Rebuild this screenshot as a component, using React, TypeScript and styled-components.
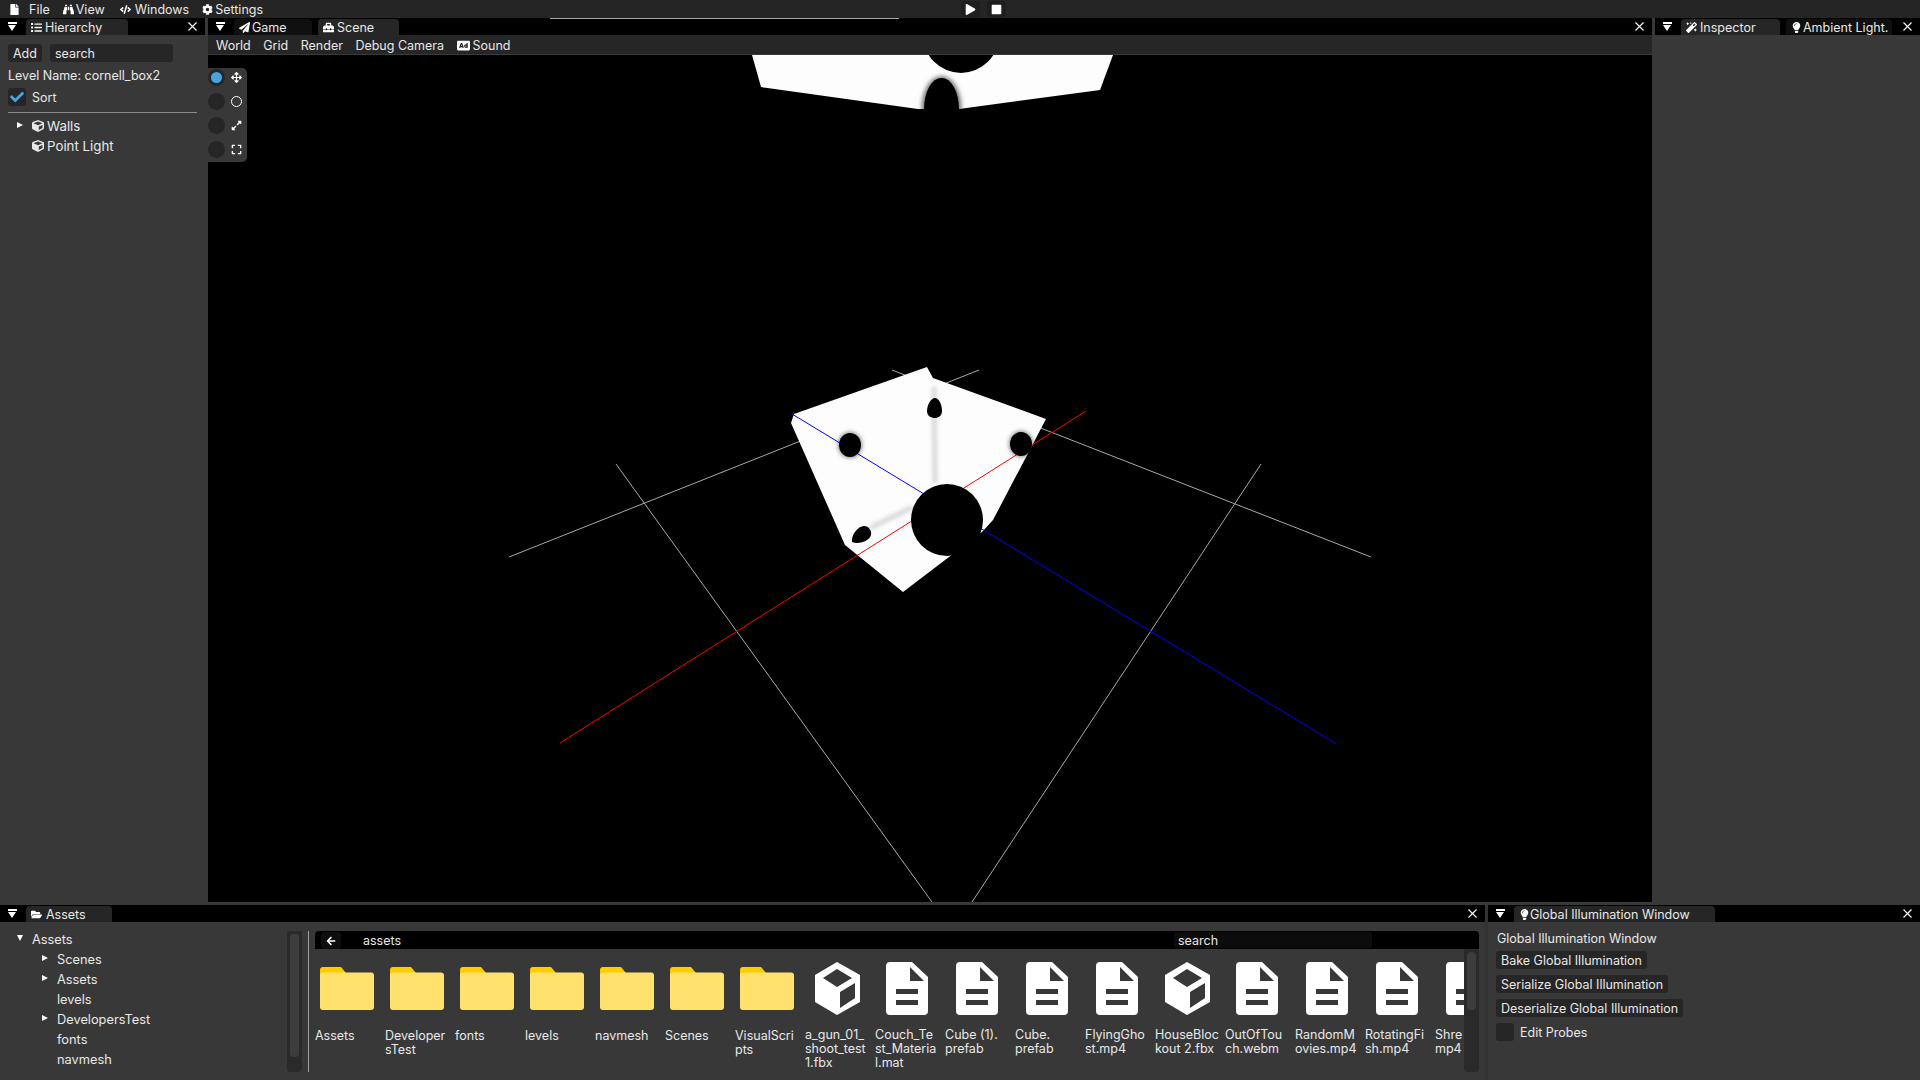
import React from "react";
import styled, { createGlobalStyle } from "styled-components";
import {
  FaAd,
  FaArrowLeft,
  FaArrowsAlt,
  FaBinoculars,
  FaCheck,
  FaCode,
  FaCog,
  FaCube,
  FaExpand,
  FaExpandAlt,
  FaFile,
  FaFolderOpen,
  FaLightbulb,
  FaList,
  FaMagic,
  FaPaperPlane,
  FaPlay,
  FaStop,
  FaToolbox,
} from "react-icons/fa";

const GlobalStyle = createGlobalStyle`
  html, body {
    margin: 0;
    padding: 0;
    background: #2a2a2a;
    overflow: hidden;
  }
  * {
    box-sizing: border-box;
  }
`;

const Page = styled.div`
  width: 1920px;
  height: 1080px;
  display: flex;
  flex-direction: column;
  background: #383838;
  color: #e8e8e8;
  font-family: Inter, "Liberation Sans", sans-serif;
  font-size: 12.5px;
  overflow: hidden;
`;

const MenuBar = styled.div`
  position: relative;
  height: 18px;
  flex: none;
  display: flex;
  align-items: center;
  background: #252525;
`;

const MenuItem = styled.div<{ $left: number; $gap?: number }>`
  display: flex;
  align-items: center;
  gap: ${(p) => p.$gap ?? 2}px;
  margin-left: ${(p) => p.$left}px;
  white-space: nowrap;
  svg {
    font-size: 11px;
    color: #fff;
  }
`;

const Progress = styled.div`
  position: absolute;
  left: 550px;
  width: 349px;
  bottom: -1px;
  height: 1px;
  background: #aaa;
  z-index: 1;
`;

const PlayControls = styled.div`
  position: absolute;
  left: 961px;
  top: 1px;
  display: flex;
  gap: 7px;
`;

const PlayButton = styled.div`
  width: 19px;
  height: 16px;
  display: flex;
  align-items: center;
  justify-content: center;
  border-radius: 3px;
  background: #1e1e1e;
  color: #fff;
  font-size: 11px;
`;

const Main = styled.div`
  height: 887px;
  flex: none;
  display: flex;
`;

const Panel = styled.section<{ $width?: number }>`
  display: flex;
  flex-direction: column;
  width: ${(p) => (p.$width ? `${p.$width}px` : "auto")};
  flex: ${(p) => (p.$width ? "none" : "1")};
  min-width: 0;
`;

const TabBar = styled.div`
  position: relative;
  height: 17px;
  flex: none;
  display: flex;
  align-items: flex-end;
  gap: 6px;
  background: #000;
  padding-left: 26px;
`;

const Tab = styled.div<{ $width: number; $dim?: boolean; $gap?: number }>`
  width: ${(p) => p.$width}px;
  height: 16px;
  display: flex;
  align-items: center;
  gap: ${(p) => p.$gap ?? 3}px;
  padding-left: 5px;
  border-radius: 4px 4px 0 0;
  background: ${(p) => (p.$dim ? "#101010" : "#262626")};
  white-space: nowrap;
  overflow: hidden;
  svg {
    font-size: 11px;
    color: #fff;
    flex: none;
  }
`;

const TabToggle = styled.div`
  position: absolute;
  left: 8px;
  top: 4px;
  width: 9px;
  height: 9px;
  &::before {
    content: "";
    display: block;
    height: 2px;
    background: #fff;
    margin-bottom: 1px;
  }
  &::after {
    content: "";
    display: block;
    width: 0;
    height: 0;
    border-left: 4.5px solid transparent;
    border-right: 4.5px solid transparent;
    border-top: 6px solid #fff;
  }
`;

const CloseButton = styled.div`
  position: absolute;
  right: 8.500px;
  top: 4px;
  width: 9px;
  height: 9px;
  display: flex;
`;

const PanelBody = styled.div`
  flex: 1;
  min-height: 0;
  background: #383838;
`;

const HierarchyBody = styled(PanelBody)`
  display: flex;
  flex-direction: column;
  padding: 9px 8px 0;
`;

const Row = styled.div<{ $gap?: number }>`
  display: flex;
  align-items: center;
  gap: ${(p) => p.$gap ?? 5}px;
`;

const Button = styled.div`
  height: 18px;
  display: inline-flex;
  align-items: center;
  align-self: flex-start;
  padding: 0 5px;
  border-radius: 3px;
  background: #262626;
  white-space: nowrap;
`;

const SearchInput = styled.div<{ $width: number }>`
  width: ${(p) => p.$width}px;
  height: 18px;
  display: flex;
  align-items: center;
  padding: 0 5px;
  border-radius: 3px;
  background: #262626;
`;

const LevelName = styled.div`
  margin-top: 6px;
  height: 16px;
  line-height: 16px;
`;

const CheckBox = styled.div`
  width: 18px;
  height: 18px;
  flex: none;
  display: flex;
  align-items: center;
  justify-content: center;
  border-radius: 3px;
  background: #262626;
  color: #4aa3df;
  font-size: 14px;
`;

const SortRow = styled(Row)`
  margin-top: 4px;
  gap: 6px;
`;

const Separator = styled.div`
  height: 1px;
  margin: 6px 0 3px;
  background: #8c8c8c;
`;

const HierarchyRow = styled.div`
  height: 20px;
  display: flex;
  align-items: center;
  gap: 3px;
  padding-left: 24px;
  position: relative;
  font-size: 13.300px;
  svg {
    font-size: 12px;
    color: #e8e8e8;
  }
`;

const Arrow = styled.span<{ $open?: boolean }>`
  position: absolute;
  width: 0;
  height: 0;
  ${(p) =>
    p.$open
      ? `border-left: 3.5px solid transparent;
         border-right: 3.5px solid transparent;
         border-top: 6px solid #fff;`
      : `border-top: 3.5px solid transparent;
         border-bottom: 3.5px solid transparent;
         border-left: 6px solid #fff;`}
`;

const RowArrow = styled(Arrow)`
  left: 9px;
  top: 6px;
`;

const Splitter = styled.div<{ $dark?: boolean }>`
  width: 3px;
  flex: none;
  background: ${(p) => (p.$dark ? "#333" : "#383838")};
`;

const SceneToolbar = styled.div`
  height: 20px;
  flex: none;
  display: flex;
  align-items: center;
  background: #262626;
  border-bottom: 1px solid #3a3a3a;
  padding: 1px 0 0 8px;
  gap: 12.5px;
`;

const ToolbarItem = styled.div`
  display: flex;
  align-items: center;
  gap: 3px;
  white-space: nowrap;
  svg {
    font-size: 13px;
    color: #fff;
  }
`;

const Viewport = styled.div`
  position: relative;
  flex: 1;
  min-height: 0;
  margin-bottom: 3px;
  background: #000;
  overflow: hidden;
`;

const SceneSvg = styled.svg`
  display: block;
  width: 100%;
  height: 100%;
`;

const Gizmos = styled.div`
  position: absolute;
  left: 0;
  top: 13px;
  width: 39px;
  padding-bottom: 4px;
  display: flex;
  flex-direction: column;
  gap: 6px;
  background: #383838;
  border-radius: 0 5px 5px 0;
`;

const GizmoRow = styled.div`
  height: 18px;
  display: flex;
  align-items: center;
  gap: 6px;
  color: #fff;
  font-size: 11px;
`;

const Radio = styled.span<{ $on?: boolean }>`
  width: 17px;
  height: 17px;
  border-radius: 50%;
  background: #262626;
  display: flex;
  align-items: center;
  justify-content: center;
  &::after {
    content: "";
    width: 11px;
    height: 11px;
    border-radius: 50%;
    background: ${(p) => (p.$on ? "#4aa3df" : "transparent")};
  }
`;

const RingIcon = styled.span`
  width: 11px;
  height: 11px;
  border-radius: 50%;
  border: 1.5px solid #fff;
`;

const GizmoIcon = styled.span`
  width: 11px;
  display: flex;
  justify-content: center;
`;

const InspectorBody = styled(PanelBody)``;

const Bottom = styled.div`
  flex: 1;
  min-height: 0;
  display: flex;
`;

const AssetsBody = styled(PanelBody)`
  display: flex;
  padding: 9px 6px 8px 0;
`;

const AssetTree = styled.div`
  width: 287px;
  flex: none;
  margin-top: -2px;
`;

const TreeRow = styled.div<{ $depth: number }>`
  position: relative;
  height: 20px;
  display: flex;
  align-items: center;
  padding-left: ${(p) => 32 + p.$depth * 25}px;
  font-size: 12.800px;
  white-space: nowrap;
`;

const TreeArrow = styled(Arrow)<{ $depth: number }>`
  left: ${(p) => 17 + p.$depth * 25}px;
  top: 6px;
`;

const VScroll = styled.div<{ $width: number; $thumb: number; $top: number }>`
  width: ${(p) => p.$width}px;
  flex: none;
  background: #2a2a2a;
  border-radius: 0 0 4px 4px;
  padding-top: ${(p) => p.$top}px;
  &::after {
    content: "";
    display: block;
    width: ${(p) => p.$width - 6}px;
    margin-left: 3px;
    height: ${(p) => p.$thumb}px;
    border-radius: 4px;
    background: #3d3d3d;
  }
`;

const Divider = styled.div`
  width: 1px;
  flex: none;
  margin: 0 6px;
  background: #a0a0a0;
`;

const Browser = styled.div`
  flex: 1;
  min-width: 0;
  display: flex;
  flex-direction: column;
`;

const BrowserHeader = styled.div`
  position: relative;
  height: 18px;
  flex: none;
  display: flex;
  align-items: center;
  background: #000;
  border-radius: 4px 4px 0 0;
  padding-left: 48px;
`;

const BackButton = styled.div`
  position: absolute;
  left: 6px;
  top: 1px;
  width: 20px;
  height: 17px;
  display: flex;
  align-items: center;
  justify-content: center;
  border-radius: 3px;
  background: #0e0e0e;
  color: #fff;
  font-size: 10px;
`;

const HeaderSearch = styled.div`
  position: absolute;
  left: 859px;
  top: 1px;
  width: 198px;
  height: 16px;
  display: flex;
  align-items: center;
  padding-left: 4px;
  border-radius: 3px;
  background: #0c0c0c;
`;

const BrowserMain = styled.div`
  flex: 1;
  min-height: 0;
  display: flex;
`;

const AssetGrid = styled.div`
  flex: 1;
  min-width: 0;
  display: flex;
  overflow: hidden;
  padding-top: 18px;
`;

const AssetCell = styled.div`
  width: 70px;
  flex: none;
`;

const AssetIconBox = styled.div`
  height: 53px;
  display: flex;
  align-items: flex-start;
  padding-left: 5px;
`;

const FileIconBox = styled(AssetIconBox)<{ $cube?: boolean }>`
  height: 57px;
  padding-left: ${(p) => (p.$cube ? 10 : 11)}px;
  margin-top: -5px;
`;

const AssetLabel = styled.div`
  margin-top: 9px;
  line-height: 14px;
  white-space: nowrap;
`;

const GiBody = styled(PanelBody)`
  display: flex;
  flex-direction: column;
  gap: 6px;
  padding: 9px 8px 0;
`;

const GiTitle = styled.div`
  height: 16px;
  line-height: 16px;
  margin: 0 0 -2px 1px;
`;

function CloseIcon() {
  return (
    <CloseButton>
      <svg width="9" height="9" viewBox="0 0 9 9" stroke="#fff" strokeWidth="1.100">
        <line x1="0.500" y1="0.500" x2="8.500" y2="8.500" />
        <line x1="8.500" y1="0.500" x2="0.500" y2="8.500" />
      </svg>
    </CloseButton>
  );
}

function FolderIcon() {
  return (
    <svg width="54" height="44" viewBox="0 0 54 44">
      <path d="M3 0h18l5 6h25v20H0V3a3 3 0 0 1 3-3z" fill="#ffcc00" />
      <path
        d="M3 5.500h48a3 3 0 0 1 3 3V40a3 3 0 0 1-3 3H3a3 3 0 0 1-3-3V8.500a3 3 0 0 1 3-3z"
        fill="#ffe26e"
      />
    </svg>
  );
}

function FileIcon() {
  return (
    <svg width="42" height="53" viewBox="0 0 42 53">
      <path
        d="M4 0h22l16 15v34a4 4 0 0 1-4 4H4a4 4 0 0 1-4-4V4a4 4 0 0 1 4-4zM24 5v14h14zM10 27v5h22v-5zM10 38v5h22v-5z"
        fill="#fff"
        fillRule="evenodd"
      />
    </svg>
  );
}

function CubeIcon() {
  return (
    <svg width="45" height="53" viewBox="0 0 45 53">
      <path
        d="M22 0l23 13v27L22 53 0 40V13zM22 7L8 16l14 9 15-9zM25 30l15-9v15l-15 10z"
        fill="#fff"
        fillRule="evenodd"
      />
    </svg>
  );
}

type Asset = { kind: "folder" | "file" | "cube"; lines: string[] };

const assets: Asset[] = [
  { kind: "folder", lines: ["Assets"] },
  { kind: "folder", lines: ["Developer", "sTest"] },
  { kind: "folder", lines: ["fonts"] },
  { kind: "folder", lines: ["levels"] },
  { kind: "folder", lines: ["navmesh"] },
  { kind: "folder", lines: ["Scenes"] },
  { kind: "folder", lines: ["VisualScri", "pts"] },
  { kind: "cube", lines: ["a_gun_01_", "shoot_test", "1.fbx"] },
  { kind: "file", lines: ["Couch_Te", "st_Materia", "l.mat"] },
  { kind: "file", lines: ["Cube (1).", "prefab"] },
  { kind: "file", lines: ["Cube.", "prefab"] },
  { kind: "file", lines: ["FlyingGho", "st.mp4"] },
  { kind: "cube", lines: ["HouseBloc", "kout 2.fbx"] },
  { kind: "file", lines: ["OutOfTou", "ch.webm"] },
  { kind: "file", lines: ["RandomM", "ovies.mp4"] },
  { kind: "file", lines: ["RotatingFi", "sh.mp4"] },
  { kind: "file", lines: ["Shre", "mp4"] },
];

const tree = [
  { name: "Assets", depth: 0, arrow: "open" },
  { name: "Scenes", depth: 1, arrow: "closed" },
  { name: "Assets", depth: 1, arrow: "closed" },
  { name: "levels", depth: 1 },
  { name: "DevelopersTest", depth: 1, arrow: "closed" },
  { name: "fonts", depth: 1 },
  { name: "navmesh", depth: 1 },
];

const boxPoints =
  "794,414 927,367 933,378 1046,419 993,520 982,532 949,557 903,592 845,545 791,423";
const ceilingPoints = "752,55 761,87 918,109 959,109 1100,90 1113,55";

function SceneDrawing() {
  return (
    <SceneSvg viewBox="208 55 1444 847" preserveAspectRatio="none">
      <defs>
        <filter id="soft" x="-50%" y="-50%" width="200%" height="200%">
          <feGaussianBlur stdDeviation="2" />
        </filter>
        <clipPath id="box-clip">
          <polygon points={boxPoints} />
        </clipPath>
        <clipPath id="ceiling-clip">
          <polygon points={ceilingPoints} />
        </clipPath>
      </defs>
      <g stroke="#a8a8a8" strokeWidth="1" fill="none">
        <line x1="509" y1="557" x2="979" y2="370" />
        <line x1="1371" y1="557" x2="892" y2="370" />
        <line x1="616" y1="464" x2="932" y2="902" />
        <line x1="1261" y1="464" x2="972" y2="902" />
      </g>
      <polygon points={ceilingPoints} fill="#fdfdfd" />
      <g clipPath="url(#ceiling-clip)">
        <g filter="url(#soft)">
          <ellipse cx="941.500" cy="109" rx="20" ry="33" fill="#777" />
        </g>
        <ellipse cx="941.500" cy="109" rx="17.500" ry="31" fill="#000" />
      </g>
      <circle cx="961" cy="35" r="38" fill="#000" />
      <polygon points={boxPoints} fill="#fdfdfd" />
      <g clipPath="url(#box-clip)">
        <g filter="url(#soft)" stroke="#cfcfcf" strokeWidth="4">
          <line x1="934" y1="387" x2="935" y2="483" />
          <line x1="870" y1="528" x2="913" y2="507" />
        </g>
        <g filter="url(#soft)" fill="#888">
          <ellipse cx="850" cy="445" rx="12" ry="13" />
          <ellipse cx="1021" cy="444" rx="12" ry="13" />
        </g>
      </g>
      <line x1="560" y1="743" x2="1086" y2="411" stroke="#ff0000" strokeWidth="1" />
      <line x1="792" y1="414" x2="1335" y2="743" stroke="#0000ff" strokeWidth="1" />
      <g fill="#000">
        <ellipse cx="850" cy="445" rx="11" ry="12" />
        <path d="M935 398C939 398 942 405 942 411C942 416 938 418 935 418C931 418 927 416 927 411C927 405 931 398 935 398z" />
        <ellipse cx="1021" cy="444" rx="11" ry="12" />
        <path d="M852 542C851 535 858 526 864 526C869 526 872 531 871 535C870 540 860 545 852 542z" />
      </g>
      <circle cx="947" cy="520" r="36" fill="#000" />
    </SceneSvg>
  );
}

export default function App() {
  return (
    <Page>
      <GlobalStyle />
      <MenuBar>
        <MenuItem $left={9}>
          <FaFile />
        </MenuItem>
        <MenuItem $left={9}>File</MenuItem>
        <MenuItem $left={13}>
          <FaBinoculars />
          View
        </MenuItem>
        <MenuItem $left={15} $gap={4}>
          <FaCode />
          Windows
        </MenuItem>
        <MenuItem $left={13}>
          <FaCog />
          Settings
        </MenuItem>
        <Progress />
        <PlayControls>
          <PlayButton>
            <FaPlay />
          </PlayButton>
          <PlayButton>
            <FaStop />
          </PlayButton>
        </PlayControls>
      </MenuBar>

      <Main>
        <Panel $width={205}>
          <TabBar>
            <TabToggle />
            <Tab $width={102}>
              <FaList />
              Hierarchy
            </Tab>
            <CloseIcon />
          </TabBar>
          <HierarchyBody>
            <Row $gap={8}>
              <Button>Add</Button>
              <SearchInput $width={123}>search</SearchInput>
            </Row>
            <LevelName>Level Name: cornell_box2</LevelName>
            <SortRow>
              <CheckBox>
                <FaCheck />
              </CheckBox>
              Sort
            </SortRow>
            <Separator />
            <HierarchyRow>
              <RowArrow />
              <FaCube />
              Walls
            </HierarchyRow>
            <HierarchyRow>
              <FaCube />
              Point Light
            </HierarchyRow>
          </HierarchyBody>
        </Panel>
        <Splitter />
        <Panel>
          <TabBar>
            <TabToggle />
            <Tab $width={78} $dim $gap={2}>
              <FaPaperPlane />
              Game
            </Tab>
            <Tab $width={81}>
              <FaToolbox />
              Scene
            </Tab>
            <CloseIcon />
          </TabBar>
          <SceneToolbar>
            <ToolbarItem>World</ToolbarItem>
            <ToolbarItem>Grid</ToolbarItem>
            <ToolbarItem>Render</ToolbarItem>
            <ToolbarItem>Debug Camera</ToolbarItem>
            <ToolbarItem>
              <FaAd />
              Sound
            </ToolbarItem>
          </SceneToolbar>
          <Viewport>
            <SceneDrawing />
            <Gizmos>
              <GizmoRow>
                <Radio $on />
                <GizmoIcon>
                  <FaArrowsAlt />
                </GizmoIcon>
              </GizmoRow>
              <GizmoRow>
                <Radio />
                <RingIcon />
              </GizmoRow>
              <GizmoRow>
                <Radio />
                <GizmoIcon>
                  <FaExpandAlt />
                </GizmoIcon>
              </GizmoRow>
              <GizmoRow>
                <Radio />
                <GizmoIcon>
                  <FaExpand />
                </GizmoIcon>
              </GizmoRow>
            </Gizmos>
          </Viewport>
        </Panel>
        <Splitter />
        <Panel $width={265}>
          <TabBar>
            <TabToggle />
            <Tab $width={99}>
              <FaMagic />
              Inspector
            </Tab>
            <Tab $width={106} $dim $gap={1}>
              <FaLightbulb />
              Ambient Light.
            </Tab>
            <CloseIcon />
          </TabBar>
          <InspectorBody />
        </Panel>
      </Main>

      <Bottom>
        <Panel $width={1485}>
          <TabBar>
            <TabToggle />
            <Tab $width={86} $gap={4}>
              <FaFolderOpen />
              Assets
            </Tab>
            <CloseIcon />
          </TabBar>
          <AssetsBody>
            <AssetTree>
              {tree.map((item) => (
                <TreeRow key={item.name + item.depth} $depth={item.depth}>
                  {item.arrow && (
                    <TreeArrow $depth={item.depth} $open={item.arrow === "open"} />
                  )}
                  {item.name}
                </TreeRow>
              ))}
            </AssetTree>
            <VScroll $width={15} $thumb={123} $top={3} />
            <Divider />
            <Browser>
              <BrowserHeader>
                <BackButton>
                  <FaArrowLeft />
                </BackButton>
                assets
                <HeaderSearch>search</HeaderSearch>
              </BrowserHeader>
              <BrowserMain>
                <AssetGrid>
                  {assets.map((asset, i) => (
                    <AssetCell key={i}>
                      {asset.kind === "folder" ? (
                        <AssetIconBox>
                          <FolderIcon />
                        </AssetIconBox>
                      ) : (
                        <FileIconBox $cube={asset.kind === "cube"}>
                          {asset.kind === "file" ? <FileIcon /> : <CubeIcon />}
                        </FileIconBox>
                      )}
                      <AssetLabel>
                        {asset.lines.map((line) => (
                          <div key={line}>{line}</div>
                        ))}
                      </AssetLabel>
                    </AssetCell>
                  ))}
                </AssetGrid>
                <VScroll $width={15} $thumb={58} $top={3} />
              </BrowserMain>
            </Browser>
          </AssetsBody>
        </Panel>
        <Splitter $dark />
        <Panel>
          <TabBar>
            <TabToggle />
            <Tab $width={201} $gap={0}>
              <FaLightbulb />
              Global Illumination Window
            </Tab>
            <CloseIcon />
          </TabBar>
          <GiBody>
            <GiTitle>Global Illumination Window</GiTitle>
            <Button>Bake Global Illumination</Button>
            <Button>Serialize Global Illumination</Button>
            <Button>Deserialize Global Illumination</Button>
            <Row $gap={6}>
              <CheckBox />
              Edit Probes
            </Row>
          </GiBody>
        </Panel>
      </Bottom>
    </Page>
  );
}
